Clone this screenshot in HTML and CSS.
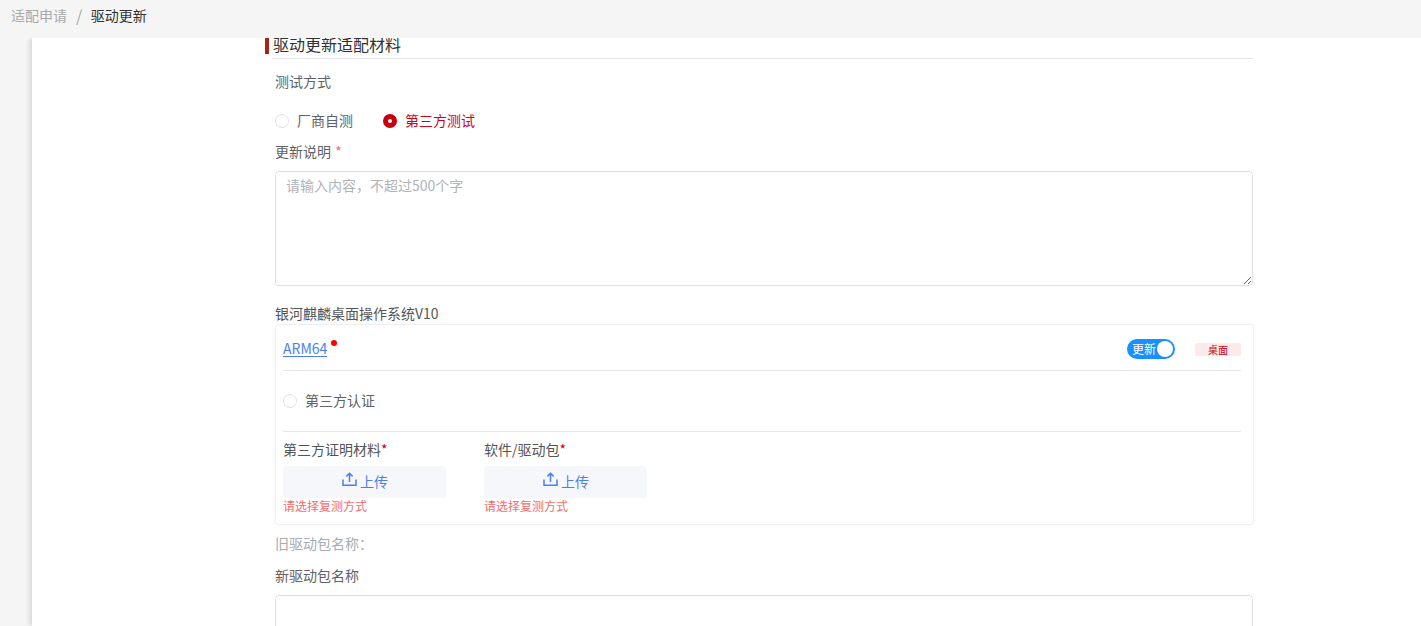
FILE: index.html
```html
<!DOCTYPE html>
<html lang="zh-CN">
<head>
<meta charset="utf-8">
<title>驱动更新</title>
<link rel="stylesheet" href="styles.css">
</head>
<body>
<header class="crumbs">
  <span class="crumb-link">适配申请</span>
  <span class="crumb-sep">/</span>
  <span class="crumb-current">驱动更新</span>
</header>
<main class="panel">
  <div class="form">
    <h2 class="section-title">驱动更新适配材料</h2>
    <div class="label test-label">测试方式</div>
    <div class="radios">
      <label class="radio"><span class="dot"></span><span>厂商自测</span></label>
      <label class="radio is-on"><span class="dot"></span><span>第三方测试</span></label>
    </div>
    <div class="label desc-label">更新说明 <span class="star">*</span></div>
    <textarea class="area" placeholder="请输入内容，不超过500个字"></textarea>
    <div class="label os-label">银河麒麟桌面操作系统V10</div>
    <section class="card">
      <div class="card-head">
        <a class="arch">ARM64</a>
        <span class="red-dot"></span>
        <span class="toggle"><span class="toggle-text">更新</span><span class="knob"></span></span>
        <span class="tag">桌面</span>
      </div>
      <div class="card-radio">
        <label class="radio"><span class="dot"></span><span>第三方认证</span></label>
      </div>
      <div class="uploads">
        <div class="upload-col">
          <div class="upload-label">第三方证明材料<span class="star-dark">*</span></div>
          <button class="upload-btn" type="button">
            <svg class="upload-icon" viewBox="0 0 15 15" width="15" height="15"><path d="M7.5 10V1.6M4.4 4.4 7.5 1.3l3.1 3.1M1 7.5v5.8h13V7.5" fill="none" stroke="currentColor" stroke-width="1.5"/></svg>
            <span>上传</span>
          </button>
          <div class="error">请选择复测方式</div>
        </div>
        <div class="upload-col">
          <div class="upload-label">软件/驱动包<span class="star-dark">*</span></div>
          <button class="upload-btn" type="button">
            <svg class="upload-icon" viewBox="0 0 15 15" width="15" height="15"><path d="M7.5 10V1.6M4.4 4.4 7.5 1.3l3.1 3.1M1 7.5v5.8h13V7.5" fill="none" stroke="currentColor" stroke-width="1.5"/></svg>
            <span>上传</span>
          </button>
          <div class="error">请选择复测方式</div>
        </div>
      </div>
    </section>
    <div class="label old-label">旧驱动包名称：</div>
    <div class="label new-label">新驱动包名称</div>
    <input class="name-input" type="text">
  </div>
</main>
</body>
</html>
```

FILE: styles.css
```css
* { box-sizing: border-box; }
html, body { height: 100%; }
body {
  margin: 0;
  height: 626px;
  overflow: hidden;
  background: #f5f5f5;
  font-family: "Noto Sans CJK SC", "Noto Sans", sans-serif;
  font-size: 14px;
  color: #555;
}
.crumbs {
  position: relative;
  z-index: 1;
  height: 38px;
  padding: 0 0 8px 11px;
  display: flex;
  align-items: center;
  background: #f5f5f5;
  line-height: 20px;
}
.crumb-link { color: #a8a8a8; }
.crumb-sep { color: #a8a8a8; margin: 0 8.5px 0 9px; font-size: 16px; }
.crumb-current { color: #303133; }
.panel {
  margin-left: 32px;
  height: 588px;
  background: #fff;
  box-shadow: -2px 0 5px rgba(0, 0, 0, .14);
  overflow: hidden;
  padding-left: 233px;
}
.form { width: 988px; }
.section-title {
  margin: 0;
  height: 21px;
  padding-left: 8px;
  font-size: 16px;
  font-weight: 400;
  line-height: 13px;
  color: #303133;
  border-bottom: 1px solid #e4e7ed;
  background: linear-gradient(#a8231a, #a8231a) left top / 4px 16px no-repeat, #fff;
  border-image: linear-gradient(to right, #fff 8px, #e4e7ed 8px) 1;
}
.label { padding-left: 10px; line-height: 20px; color: #606266; }
.test-label { margin-top: 12px; }
.radios { display: flex; gap: 30px; margin-top: 19px; padding-left: 10px; height: 20px; }
.radio { display: inline-flex; align-items: center; gap: 8px; line-height: 20px; color: #606266; }
.dot { width: 14px; height: 14px; margin-top: 2px; border-radius: 50%; border: 1px solid #dcdfe6; background: #fff; }
.is-on { color: #d0021b; }
.is-on .dot { border: 5px solid #c7000b; }
.desc-label { margin-top: 11px; }
.star { color: #f56c6c; margin-left: 1px; }
.star-dark { color: #c7000b; }
.area {
  display: block;
  width: 978px;
  height: 115px;
  margin: 10px 0 0 10px;
  padding: 3px 10px;
  border: 1px solid #dcdfe6;
  border-radius: 4px;
  font: 14px/20px "Noto Sans CJK SC", sans-serif;
  color: #606266;
  outline: none;
}
.area::placeholder { color: #b0b3b8; opacity: 1; }
.os-label { margin-top: 17px; color: #555; }
.card {
  margin: 1px 0 0 10px;
  width: 979px;
  height: 201px;
  padding: 0 12px 0 7px;
  border: 1px solid #f0f0f2;
  border-radius: 4px;
  box-shadow: 0 0 4px rgba(0, 0, 0, .05);
}
.card-head {
  height: 46px;
  padding-top: 2px;
  display: flex;
  align-items: center;
  border-bottom: 1px solid #e4e7ed;
}
.arch { color: #4a7ff0; border-bottom: 1px solid #4a7ff0; line-height: 16px; }
.red-dot { width: 6px; height: 6px; border-radius: 50%; background: #f00; margin: -12px 0 0 4px; }
.toggle {
  margin-left: auto;
  width: 48px;
  height: 20px;
  border-radius: 10px;
  background: #1890ff;
  color: #fff;
  display: flex;
  align-items: center;
  justify-content: space-between;
  padding: 0 2px 0 5px;
}
.toggle-text { font-size: 12px; line-height: 20px; }
.knob { width: 16px; height: 16px; border-radius: 50%; background: #fff; }
.tag {
  width: 46px;
  height: 13px;
  margin: 1px 0 0 20px;
  border-radius: 2px;
  background: #fde8ea;
  color: #c7000b;
  font-size: 10px;
  line-height: 13px;
  text-align: center;
}
.card-radio {
  height: 61px;
  padding-bottom: 2px;
  display: flex;
  align-items: center;
  border-bottom: 1px solid #e4e7ed;
}
.uploads { display: flex; gap: 38px; padding-top: 7px; }
.upload-col { width: 163px; }
.upload-label { line-height: 20px; color: #555; }
.upload-btn {
  display: flex;
  align-items: center;
  justify-content: center;
  gap: 3px;
  width: 163px;
  height: 32px;
  margin-top: 7px;
  padding: 0 0 2px 1px;
  border: 0;
  border-radius: 3px;
  background: #f6f7fa;
  color: #4a7ff0;
  font: 14px/20px "Noto Sans CJK SC", sans-serif;
}
.upload-icon { display: block; margin-top: -3px; }
.error { margin-top: -1px; font-size: 12px; line-height: 17px; color: #f56c6c; }
.old-label { margin-top: 8px; color: #a8abb2; }
.new-label { margin-top: 12px; }
.name-input {
  display: block;
  width: 978px;
  height: 60px;
  margin: 10px 0 0 10px;
  border: 1px solid #dcdfe6;
  border-radius: 4px;
  outline: none;
}
```
